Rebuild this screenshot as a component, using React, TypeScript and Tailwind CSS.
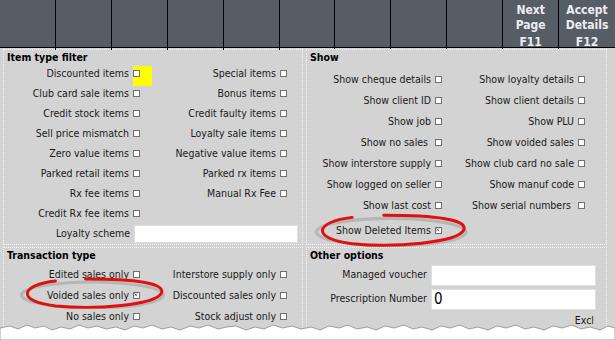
import React from "react";

const font = "font-['DejaVu_Sans_Condensed','DejaVu_Sans',sans-serif]";

const Box = ({ checked }: { checked?: boolean }) => (
  <span className="relative inline-block w-[7px] h-[7px] shrink-0 border border-[#707070] bg-white">
    {checked && (
      <svg viewBox="0 0 7 7" className="absolute inset-0 w-[5px] h-[5px]">
        <path d="M0.5 0.5 L4.5 4.5 M4.5 0.5 L0.5 4.5" stroke="#404040" strokeWidth="1" />
      </svg>
    )}
  </span>
);

interface OptProps {
  label: string;
  checked?: boolean;
  w: string;
  highlight?: boolean;
}

const Opt = ({ label, checked, w, highlight }: OptProps) => (
  <div className={`relative flex items-center justify-end gap-[4px] ${w}`}>
    <span className="whitespace-pre">{label}</span>
    {highlight && <span className="absolute right-[-12px] top-0 w-[19px] h-[20px] bg-[#ffff00]" />}
    <span className="relative">
      <Box checked={checked} />
    </span>
  </div>
);

// hand drawn red ring used in the screenshot
const Ellipse = ({ className }: { className: string }) => (
  <svg viewBox="0 0 150 32" className={`absolute pointer-events-none ${className}`}>
    <ellipse cx="77" cy="18" rx="71" ry="13" fill="none" stroke="#9a9a9a" strokeWidth="3" opacity="0.5" />
    <path d="M40 4 C 5 8, 0 24, 40 29 C 80 33, 140 28, 146 16 C 150 6, 120 2, 70 2" fill="none" stroke="#e01010" strokeWidth="2.8" strokeLinecap="round" />
  </svg>
);

const Section = ({ title, children, className }: { title: string; children: React.ReactNode; className?: string }) => (
  <div className={`border border-dotted border-[#f4f4f4] ${className ?? ""}`}>
    <div className="h-[14px] leading-[14px] pl-[3px] font-bold text-black">{title}</div>
    {children}
  </div>
);

export default function App() {
  const cells = Array.from({ length: 11 });
  const itemRows: [string, string | null][] = [
    ["Discounted items", "Special items"],
    ["Club card sale items", "Bonus items"],
    ["Credit stock items", "Credit faulty items"],
    ["Sell price mismatch", "Loyalty sale items"],
    ["Zero value items", "Negative value items"],
    ["Parked retail items", "Parked rx items"],
    ["Rx fee items", "Manual Rx Fee"],
    ["Credit Rx fee items", null],
  ];
  const showRows: [string, string][] = [
    ["Show cheque details", "Show loyalty details"],
    ["Show client ID", "Show client details"],
    ["Show job", "Show PLU"],
    ["Show no sales ", "Show voided sales"],
    ["Show interstore supply", "Show club card no sale"],
    ["Show logged on seller", "Show manuf code"],
    ["Show last cost", "Show serial numbers "],
  ];
  const txRows: [string, string, boolean][] = [
    ["Edited sales only", "Interstore supply only", false],
    ["Voided sales only", "Discounted sales only", true],
    ["No sales only", "Stock adjust only", false],
  ];

  return (
    <div className={`relative w-[615px] h-[340px] overflow-hidden bg-white text-[10.5px] text-[#1a1a1a] ${font}`}>
      {/* function key bar */}
      <div className="grid grid-cols-11 h-[48px] bg-[#575d65] border-b border-black">
        {cells.map((_, i) => (
          <div key={i} className={`flex flex-col items-center pt-[3px] text-[12px] font-bold leading-[15px] text-[#ecedf4] ${i < 10 ? "border-r border-black" : ""}`}>
            {i === 9 && (
              <>
                <span>Next</span>
                <span>Page</span>
                <span className="mt-[2px]">F11</span>
              </>
            )}
            {i === 10 && (
              <>
                <span>Accept</span>
                <span>Details</span>
                <span className="mt-[2px]">F12</span>
              </>
            )}
          </div>
        ))}
      </div>

      {/* body */}
      <div className="grid grid-cols-[306px_301px_8px] h-[284px] bg-[#d3d3d3] pt-[1px]">
        <div className="flex flex-col gap-[2px] pl-[3px] pr-[3px]">
          <Section title="Item type filter" className="h-[196px]">
            <div className="flex flex-col">
              {itemRows.map(([a, b], i) => (
                <div key={a} className="flex h-[20px] items-center">
                  <Opt label={a} w="w-[136px]" highlight={i === 0} />
                  {b && <Opt label={b} w="w-[147px]" />}
                </div>
              ))}
              <div className="flex h-[20px] items-center">
                <div className="flex w-[126px] justify-end">Loyalty scheme</div>
                <div className="ml-[4px] h-[18px] w-[164px] bg-white border border-[#e0e0e0]" />
              </div>
            </div>
          </Section>
          <Section title="Transaction type" className="flex-1 border-b-0">
            <div className="relative flex flex-col pt-[2px]">
              {txRows.map(([a, b, c]) => (
                <div key={a} className="flex h-[21px] items-center">
                  <Opt label={a} w="w-[136px]" checked={c} />
                  <Opt label={b} w="w-[147px]" />
                </div>
              ))}
              <Ellipse className="left-[9px] top-[15px] w-[155px] h-[32px]" />
            </div>
          </Section>
        </div>

        <div className="flex flex-col gap-[2px]">
          <Section title="Show" className="h-[196px]">
            <div className="flex flex-col pt-[5px]">
              {showRows.map(([a, b]) => (
                <div key={a} className="flex h-[21px] items-center">
                  <Opt label={a} w="w-[135px]" />
                  <Opt label={b} w="w-[143px]" />
                </div>
              ))}
              <div className="relative mt-[4px] flex h-[21px] items-center">
                <Opt label="Show Deleted Items" w="w-[135px]" checked />
                <Ellipse className="left-[3px] top-[-7px] w-[158px] h-[34px]" />
              </div>
            </div>
          </Section>
          <Section title="Other options" className="flex-1 border-b-0">
            <div className="flex flex-col pt-[1px]">
              <div className="flex h-[24px] items-center">
                <div className="flex w-[120px] justify-end">Managed voucher</div>
                <div className="ml-[4px] h-[21px] w-[165px] bg-white border border-[#e0e0e0]" />
              </div>
              <div className="flex h-[24px] items-center">
                <div className="flex w-[120px] justify-end">Prescription Number</div>
                <div className="ml-[4px] flex h-[21px] w-[165px] items-center bg-white border border-[#e0e0e0] pl-[2px] text-[15px] text-black leading-none">0</div>
              </div>
              <div className="flex h-[20px] items-center justify-end pr-[12px]">Excl</div>
            </div>
          </Section>
        </div>
        <div />
      </div>

      {/* torn paper edge */}
      <svg viewBox="0 0 615 20" preserveAspectRatio="none" className="absolute left-0 bottom-0 w-[615px] h-[20px]">
        <path
          d="M0 8 L10 6 L18 9 L27 5 L35 8 L44 6 L52 10 L61 7 L70 9 L79 5 L88 8 L97 6 L106 9 L116 7 L125 10 L134 6 L143 8 L152 5 L162 9 L171 7 L180 10 L190 6 L199 8 L208 5 L218 9 L227 7 L236 6 L246 10 L255 7 L264 9 L273 5 L283 8 L292 6 L301 9 L311 7 L320 10 L329 6 L339 8 L348 5 L357 9 L367 7 L376 10 L385 6 L394 8 L404 5 L413 9 L422 7 L432 10 L441 6 L450 8 L460 5 L469 9 L478 7 L488 10 L497 6 L506 8 L516 5 L525 9 L534 7 L544 10 L553 6 L562 8 L572 5 L581 9 L590 7 L600 10 L608 6 L615 8 L615 20 L0 20 Z"
          fill="#ffffff"
          stroke="#8a8a8a"
          strokeWidth="0.8"
        />
      </svg>
    </div>
  );
}
